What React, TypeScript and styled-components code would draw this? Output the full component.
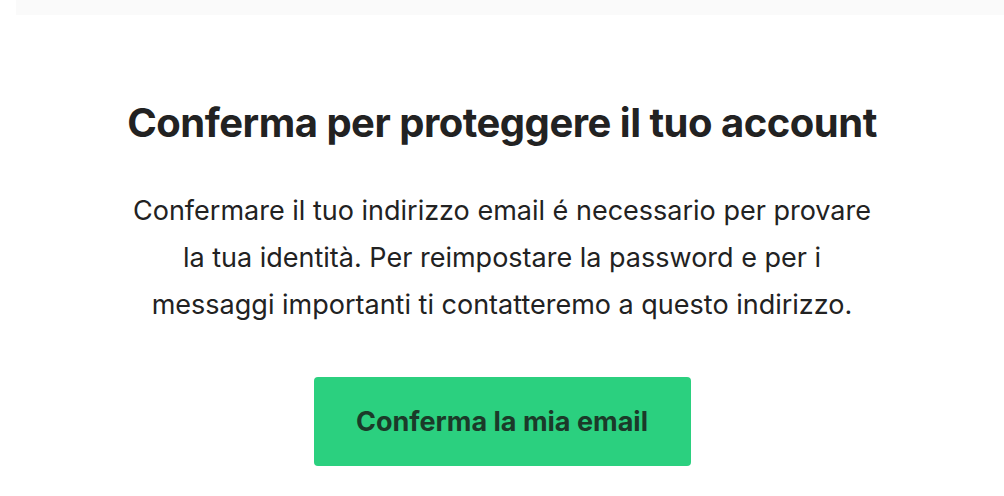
import styled, { createGlobalStyle } from 'styled-components'

const GlobalStyle = createGlobalStyle`
    body {
        margin: 0;
        background: #ffffff;
        font-family: Inter, "Noto Sans", "Liberation Sans", sans-serif;
        color: #222222;
    }
`

export default function App() {
    return (
        <>
            <GlobalStyle />
            <Page>
                <TopStrip />
                <Content>
                    <Title>Conferma per proteggere il tuo account</Title>
                    <Text>
                        Confermare il tuo indirizzo email é necessario per provare
                        <br />
                        la tua identità. Per reimpostare la password e per i
                        <br />
                        messaggi importanti ti contatteremo a questo indirizzo.
                    </Text>
                    <ConfirmButton>Conferma la mia email</ConfirmButton>
                </Content>
            </Page>
        </>
    )
}

const Page = styled.div`
    width: 1004px;
    height: 496px;
    display: flex;
    flex-direction: column;
    overflow: hidden;
`

const TopStrip = styled.div`
    height: 15px;
    margin-left: 16px;
    background: #fafafa;
`

const Content = styled.div`
    display: flex;
    flex-direction: column;
    align-items: center;
    padding-top: 84px;
`

const Title = styled.h1`
    margin: 0;
    font-size: 40px;
    font-weight: 700;
    letter-spacing: -0.5px;
    line-height: 48px;
    color: #222222;
`

const Text = styled.p`
    margin: 40px 0 0;
    font-size: 27px;
    line-height: 47px;
    text-align: center;
    color: #222222;
`

const ConfirmButton = styled.button`
    margin-top: 49px;
    width: 377px;
    height: 89px;
    border: 0;
    border-radius: 4px;
    background: #2bd07f;
    color: #1b3a29;
    font-family: inherit;
    font-size: 27px;
    font-weight: 700;
    padding: 0;
    cursor: pointer;
`
